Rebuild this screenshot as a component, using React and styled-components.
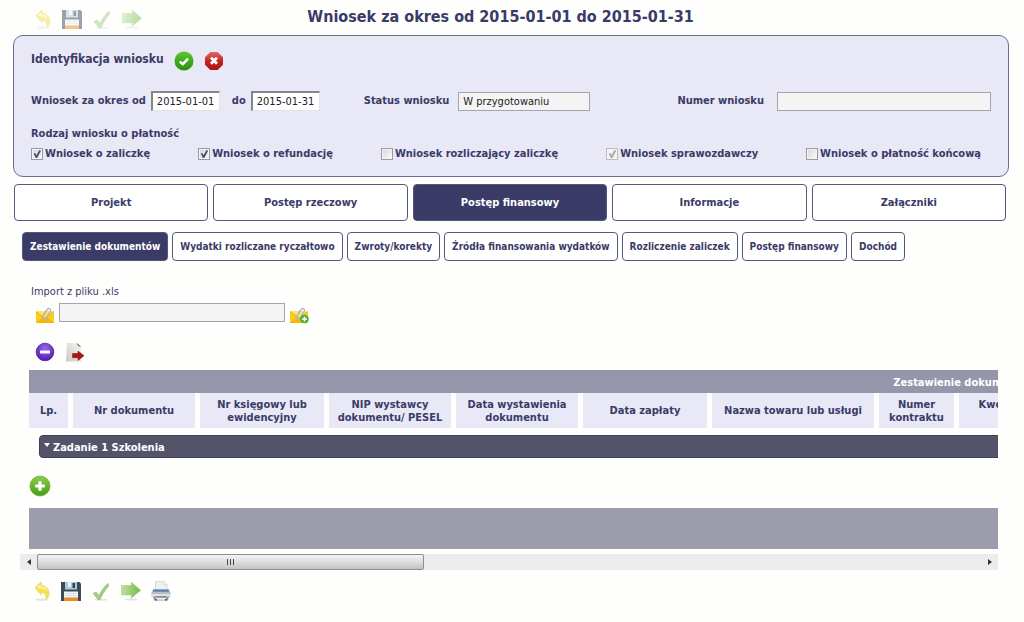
import React, { useState } from 'react';
import styled, { createGlobalStyle } from 'styled-components';

const NAVY = '#3a3b66';

const GlobalStyle = createGlobalStyle`
  * {
    box-sizing: border-box;
  }
  body {
    margin: 0;
    background: #fefefd;
    color: ${NAVY};
    font-family: 'DejaVu Sans Condensed', 'DejaVu Sans', Tahoma, sans-serif;
    font-size: 11px;
    line-height: 14px;
  }
  button, input {
    font: inherit;
    color: inherit;
  }
`;

const UndoIcon = () => (
  <svg width="20" height="20" viewBox="0 0 20 20">
    <ellipse cx="11" cy="18.600" rx="6.500" ry="1.200" fill="#e4e4e2" />
    <path d="M4 6.600 10.200 1v3.200c4.600.6 7.800 4 7.800 8.400 0 2.400-1 4.400-3 5.600.6-3.600-.8-6.400-4.800-7.200v3z" fill="#f7e04b" stroke="#e3ca45" strokeWidth=".6" />
    <path d="M5.400 6.600 9.400 2.900v2.200c4 .3 6.600 2.600 7.400 5.700C14.800 8.500 12.500 7.600 9.400 7.600z" fill="#fdf3a0" />
  </svg>
);

const SaveIcon = () => (
  <svg width="20" height="20" viewBox="0 0 20 20">
    <path d="M0 1h18.500L20 2.500V20H0z" fill="#3d4b56" />
    <path d="M4 1h12v7.500H4z" fill="#a9cbd9" />
    <path d="M7 1h3v5H7z" fill="#e8f3f6" />
    <path d="M11.500 2h2.500v5h-2.500z" fill="#35434e" />
    <path d="M3 10.500h14V17H3z" fill="#f1f5f7" />
    <path d="M3 16.500h14V20H3z" fill="#f08a24" />
    <path d="M4 12.500h12M4 14.500h12" stroke="#cfd9de" strokeWidth=".7" />
  </svg>
);

const CheckIcon = () => (
  <svg width="20" height="20" viewBox="0 0 20 20">
    <ellipse cx="10" cy="18.800" rx="6.500" ry="1" fill="#e4e4e2" />
    <path d="M2.200 12.400 4.900 11 8 14.600C10.500 9.600 13.200 5.500 17 2.400L17.800 4.800C14 9 11.200 13.500 9 18.600H7z" fill="#a2cf80" stroke="#83b765" strokeWidth=".6" />
  </svg>
);

const ForwardIcon = () => (
  <svg width="20" height="20" viewBox="0 0 20 20">
    <defs>
      <linearGradient id="forward" x1="0" x2="1">
        <stop offset="0" stopColor="#bfdfa2" />
        <stop offset="1" stopColor="#74b843" />
      </linearGradient>
    </defs>
    <ellipse cx="10" cy="18.500" rx="6.500" ry="1" fill="#e4e4e2" />
    <path d="M.5 4.500h9.800V1.200L19.700 9.200l-9.400 8v-3.300H.5z" fill="url(#forward)" stroke="#a3cf82" strokeWidth=".6" />
  </svg>
);

const PrintIcon = () => (
  <svg width="20" height="20" viewBox="0 0 20 20">
    <path d="M4.500.5h8.700L16 3.200V10H4.500z" fill="#eef0f2" stroke="#c3c8cc" strokeWidth=".6" />
    <path d="M13 .5v3h3" fill="#fff" stroke="#c3c8cc" strokeWidth=".6" />
    <path d="M2 8.500h16l1.500 3v4.500H.5v-4.500z" fill="#b5bec7" />
    <path d="M2.200 8.500h15.600v2.200H2.200z" fill="#5b7da8" />
    <path d="M.5 13h19v2.500H.5z" fill="#dfe4e8" />
    <path d="M2 15.500h16l-1 4H3z" fill="#9299a0" />
    <path d="M5 16h10v2.800H5z" fill="#e9eaea" />
    <path d="M5 15.500h10v1H5zM4 18h2v1.500H4zM14 18h2v1.500h-2z" fill="#5b6168" />
  </svg>
);

const AcceptIcon = () => (
  <svg width="20" height="20" viewBox="0 0 20 20">
    <defs>
      <linearGradient id="accept" x1="0" x2="0" y1="0" y2="1">
        <stop offset="0" stopColor="#5fc535" />
        <stop offset="1" stopColor="#2a8f0b" />
      </linearGradient>
    </defs>
    <circle cx="10" cy="10" r="9.500" fill="url(#accept)" />
    <path d="M5.800 10.600 8.800 13.200 14 7.600" fill="none" stroke="#fff" strokeWidth="2.500" />
  </svg>
);

const CancelIcon = () => (
  <svg width="20" height="20" viewBox="0 0 20 20">
    <defs>
      <linearGradient id="cancel" x1="0" x2="0" y1="0" y2="1">
        <stop offset="0" stopColor="#de6a68" />
        <stop offset=".5" stopColor="#c42522" />
        <stop offset="1" stopColor="#ad1210" />
      </linearGradient>
    </defs>
    <path d="M6.300 1h7.400L19 6.300v7.400L13.700 19H6.300L1 13.700V6.300z" fill="url(#cancel)" />
    <path d="M7 6.800 13 12.800M13 6.800 7 12.800" stroke="#fff" strokeWidth="2.800" />
  </svg>
);

const MinusIcon = () => (
  <svg width="20" height="20" viewBox="0 0 20 20">
    <defs>
      <radialGradient id="minus" cx=".5" cy=".3" r=".7">
        <stop offset="0" stopColor="#9566ea" />
        <stop offset="1" stopColor="#5518b4" />
      </radialGradient>
    </defs>
    <circle cx="10" cy="10" r="8.800" fill="url(#minus)" stroke="#4a1a9e" strokeWidth=".8" />
    <rect x="5" y="8.600" width="10" height="2.800" rx=".5" fill="#fff" />
  </svg>
);

const ExportIcon = () => (
  <svg width="20" height="20" viewBox="0 0 20 20">
    <defs>
      <linearGradient id="sheet" x1="1" x2="0" y1="0" y2="1">
        <stop offset="0" stopColor="#f6f6f4" />
        <stop offset="1" stopColor="#c9c9c7" />
      </linearGradient>
    </defs>
    <path d="M2 1h10l4 4v14.500H1z" fill="url(#sheet)" />
    <path d="M12 1l4 4-1.200-.2L12.600 3z" fill="#333" />
    <path d="M7.500 11.500h5.500V9l6 4.700-6 4.800v-2.800H7.500z" fill="#b01216" stroke="#7d0e12" strokeWidth=".5" />
  </svg>
);

const MailIcon = ({ plus }) => (
  <svg width="20" height="20" viewBox="0 0 20 20">
    <path d="M1 5.500h18V17H1z" fill="#fccb1f" />
    <path d="M1 5.500 10 12l9-6.500z" fill="#ffe45c" />
    <path d="M1 17 8 11l2 1.500 2-1.500 7 6z" fill="#f4b50e" />
    <path d="M1 5.500 10 12.200 19 5.500" fill="none" stroke="#e09e12" strokeWidth=".7" />
    <path d="M8 10.500 12.200 3.500c1-1.900 4.200-.5 3.200 1.600l-4 6.600c-1.600 2.200-4.600.6-3.500-1.600L11.500 4" fill="none" stroke="#a9b5cc" strokeWidth="1.300" />
    {plus && <circle cx="15.500" cy="13" r="4.300" fill="#4fae2c" />}
    {plus && <path d="M13 13h5M15.500 10.500v5" stroke="#fff" strokeWidth="1.500" />}
  </svg>
);

const AddIcon = () => (
  <svg width="22" height="22" viewBox="0 0 22 22">
    <defs>
      <linearGradient id="add" x1="0" x2="0" y1="0" y2="1">
        <stop offset="0" stopColor="#8fcc4c" />
        <stop offset="1" stopColor="#469c17" />
      </linearGradient>
    </defs>
    <circle cx="11" cy="11" r="10" fill="url(#add)" stroke="#62ad30" strokeWidth=".8" />
    <path d="M6.200 11h9.600M11 6.200v9.600" stroke="#fff" strokeWidth="3.200" />
  </svg>
);

const mainTabs = ['Projekt', 'Postęp rzeczowy', 'Postęp finansowy', 'Informacje', 'Załączniki'];

const subTabs = [
  'Zestawienie dokumentów',
  'Wydatki rozliczane ryczałtowo',
  'Zwroty/korekty',
  'Źródła finansowania wydatków',
  'Rozliczenie zaliczek',
  'Postęp finansowy',
  'Dochód',
];

const kinds = [
  { id: 'zaliczka', label: 'Wniosek o zaliczkę', on: true },
  { id: 'refundacja', label: 'Wniosek o refundację', on: true },
  { id: 'rozliczajacy', label: 'Wniosek rozliczający zaliczkę' },
  { id: 'sprawozdawczy', label: 'Wniosek sprawozdawczy', on: true, disabled: true },
  { id: 'koncowa', label: 'Wniosek o płatność końcową' },
];

// widths include the 5px separator on the right
const columns = [
  { title: 'Lp.', width: 44 },
  { title: 'Nr dokumentu', width: 127 },
  { title: 'Nr księgowy lub ewidencyjny', width: 129 },
  { title: 'NIP wystawcy dokumentu/ PESEL', width: 127 },
  { title: 'Data wystawienia dokumentu', width: 127 },
  { title: 'Data zapłaty', width: 129 },
  { title: 'Nazwa towaru lub usługi', width: 167 },
  { title: 'Numer kontraktu', width: 80 },
  { title: 'Kwota dokumentu brutto', width: 146 },
];

const App = () => {
  const [tab, setTab] = useState(2);
  const [subTab, setSubTab] = useState(0);

  return (
    <Page>
      <GlobalStyle />
      <Header>
        <Toolbar $faded>
          <IconButton aria-label="Cofnij"><UndoIcon /></IconButton>
          <IconButton aria-label="Zapisz"><SaveIcon /></IconButton>
          <IconButton aria-label="Sprawdź"><CheckIcon /></IconButton>
          <IconButton aria-label="Dalej"><ForwardIcon /></IconButton>
        </Toolbar>
        <Title>Wniosek za okres od 2015-01-01 do 2015-01-31</Title>
      </Header>

      <Panel>
        <PanelHead>
          <PanelTitle>Identyfikacja wniosku</PanelTitle>
          <IconButton aria-label="Zatwierdź"><AcceptIcon /></IconButton>
          <IconButton aria-label="Anuluj"><CancelIcon /></IconButton>
        </PanelHead>
        <Fields>
          <Field>
            <Label htmlFor="from">Wniosek za okres od</Label>
            <DateInput id="from" defaultValue="2015-01-01" />
          </Field>
          <Field>
            <Label htmlFor="to">do</Label>
            <DateInput id="to" defaultValue="2015-01-31" />
          </Field>
          <StatusField>
            <Label htmlFor="status">Status wniosku</Label>
            <ReadInput id="status" $width={132} readOnly value="W przygotowaniu" />
          </StatusField>
          <NumberField>
            <Label htmlFor="number">Numer wniosku</Label>
            <ReadInput id="number" $width={214} readOnly value="" />
          </NumberField>
        </Fields>
        <Kinds>
          <KindsTitle>Rodzaj wniosku o płatność</KindsTitle>
          <KindsRow>
            {kinds.map((k) => (
              <Kind key={k.id} htmlFor={k.id}>
                <Tick id={k.id} type="checkbox" defaultChecked={k.on} disabled={k.disabled} />
                {k.label}
              </Kind>
            ))}
          </KindsRow>
        </Kinds>
      </Panel>

      <Tabs>
        {mainTabs.map((name, i) => (
          <Tab key={name} $active={tab === i} onClick={() => setTab(i)}>{name}</Tab>
        ))}
      </Tabs>
      <SubTabs>
        {subTabs.map((name, i) => (
          <SubTab key={name} $active={subTab === i} onClick={() => setSubTab(i)}>{name}</SubTab>
        ))}
      </SubTabs>

      <Import>
        <label htmlFor="file">Import z pliku .xls</label>
        <ImportRow>
          <IconButton aria-label="Wybierz plik"><MailIcon /></IconButton>
          <ReadInput id="file" $width={226} readOnly value="" />
          <IconButton aria-label="Dodaj plik"><MailIcon plus /></IconButton>
        </ImportRow>
      </Import>
      <Actions>
        <IconButton aria-label="Usuń"><MinusIcon /></IconButton>
        <IconButton aria-label="Eksportuj"><ExportIcon /></IconButton>
      </Actions>

      <Scroller>
        <Table>
          <colgroup>
            {columns.map((c) => <col key={c.title} style={{ width: c.width }} />)}
            <col />
          </colgroup>
          <thead>
            <tr>
              <Band colSpan={10}>Zestawienie dokumentów</Band>
            </tr>
            <tr>
              {columns.map((c) => <Th key={c.title}>{c.title}</Th>)}
              <Th aria-hidden="true" />
            </tr>
          </thead>
          <tbody>
            <tr>
              <Cell colSpan={10}>
                <Task><Caret />Zadanie 1 Szkolenia</Task>
              </Cell>
            </tr>
            <tr>
              <Cell colSpan={10}>
                <AddButton aria-label="Dodaj"><AddIcon /></AddButton>
              </Cell>
            </tr>
          </tbody>
          <tfoot>
            <tr>
              <Summary colSpan={10} />
            </tr>
          </tfoot>
        </Table>
      </Scroller>
      <ScrollBar>
        <Arrow aria-label="Przewiń w lewo">
          <svg width="4" height="6" viewBox="0 0 4 6"><path d="M4 0v6L0 3z" fill="#333" /></svg>
        </Arrow>
        <Track>
          <Thumb><i /><i /><i /></Thumb>
        </Track>
        <Arrow aria-label="Przewiń w prawo">
          <svg width="4" height="6" viewBox="0 0 4 6"><path d="M0 0v6l4-3z" fill="#333" /></svg>
        </Arrow>
      </ScrollBar>

      <BottomBar>
        <IconButton aria-label="Cofnij"><UndoIcon /></IconButton>
        <IconButton aria-label="Zapisz"><SaveIcon /></IconButton>
        <IconButton aria-label="Sprawdź"><CheckIcon /></IconButton>
        <IconButton aria-label="Dalej"><ForwardIcon /></IconButton>
        <IconButton aria-label="Drukuj"><PrintIcon /></IconButton>
      </BottomBar>
    </Page>
  );
};

export default App;

const Page = styled.main`
  padding: 0 15px 20px 13px;
`;

const Header = styled.header`
  display: grid;
  grid-template-columns: 1fr auto 1fr;
  padding: 0 21px 0 0;
  height: 35px;
`;

const Toolbar = styled.div`
  display: flex;
  gap: 10px;
  padding: 9px 0 0 19px;
  opacity: ${(p) => (p.$faded ? 0.5 : 1)};
`;

const IconButton = styled.button`
  display: flex;
  flex: none;
  padding: 0;
  border: 0;
  background: none;
  cursor: pointer;
`;

const Title = styled.h1`
  margin: 0;
  padding-top: 7px;
  font-size: 16px;
  line-height: 20px;
  white-space: nowrap;
`;

const Panel = styled.section`
  padding: 15px 17px 14px;
  border: 1px solid #6c6d92;
  border-radius: 10px;
  background: #e8e8f6;
`;

const PanelHead = styled.div`
  display: flex;
  gap: 10px;
`;

const PanelTitle = styled.h2`
  margin: 0;
  font-size: 12px;
  line-height: 16px;
`;

const Fields = styled.div`
  display: flex;
  align-items: center;
  margin-top: 20px;
`;

const Field = styled.div`
  display: flex;
  align-items: center;
  gap: 5px;
  margin-right: 12px;
`;

const StatusField = styled(Field)`
  gap: 9px;
  margin-left: 32px;
`;

const NumberField = styled(Field)`
  gap: 13px;
  margin: 0 0 0 auto;
`;

const Label = styled.label`
  font-weight: bold;
  white-space: nowrap;
`;

const DateInput = styled.input`
  width: 69px;
  height: 20px;
  padding: 0 4px;
  border: 1px solid #e3e3e3;
  border-top: 2px solid #85868c;
  border-left: 2px solid #85868c;
  background: #fff;
  color: #222;
`;

const ReadInput = styled.input`
  width: ${(p) => p.$width}px;
  height: 19px;
  padding: 0 4px;
  border: 1px solid #a3a4b0;
  background: #f4f4f4;
  color: #222;
`;

const Kinds = styled.div`
  margin-top: 15px;
`;

const KindsTitle = styled.div`
  font-weight: bold;
  line-height: 16px;
`;

const KindsRow = styled.div`
  display: flex;
  justify-content: space-between;
  padding: 4px 10px 0 0;
`;

const Kind = styled.label`
  display: flex;
  align-items: center;
  gap: 2px;
  font-weight: bold;
  line-height: 16px;
  white-space: nowrap;
`;

const Tick = styled.input`
  appearance: none;
  display: flex;
  align-items: center;
  justify-content: center;
  width: 12px;
  height: 12px;
  margin: 0;
  border: 1px solid #9a9ba0;
  background: linear-gradient(135deg, #d3d5d8, #fbfbfb);
  box-shadow: inset 0 0 0 1px #f4f4f4;

  &:checked::before {
    content: '';
    width: 8px;
    height: 8px;
    background: #43517f;
    clip-path: polygon(8% 45%, 28% 38%, 42% 66%, 80% 0, 100% 8%, 52% 100%, 34% 100%);
  }
  &:disabled {
    border-color: #bcbcbc;
    background: #f2f2f2;
  }
  &:disabled::before {
    background: #a5a5a5;
  }
`;

const Tabs = styled.nav`
  display: grid;
  grid-template-columns: repeat(5, 1fr);
  gap: 5px;
  margin: 7px 3px 0 1px;
`;

const Tab = styled.button`
  height: 37px;
  border: 1px solid #56577f;
  border-radius: 4px;
  background: ${(p) => (p.$active ? NAVY : '#fff')};
  color: ${(p) => (p.$active ? '#fff' : NAVY)};
  font-weight: bold;
  cursor: pointer;
`;

const SubTabs = styled.nav`
  display: flex;
  gap: 4px;
  margin: 11px 0 0 9px;
`;

const SubTab = styled(Tab)`
  height: 29px;
  padding: 0 7px;
  font-size: 10px;
  white-space: nowrap;
`;

const Import = styled.div`
  margin: 24px 0 0 18px;
`;

const ImportRow = styled.div`
  display: flex;
  align-items: flex-start;
  gap: 4px;
  padding: 4px 0 0 4px;

  button {
    padding-top: 3px;
  }
`;

const Actions = styled.div`
  display: flex;
  gap: 10px;
  margin: 16px 0 0 22px;
`;

const Scroller = styled.div`
  margin: 8px 11px 0 16px;
  overflow: hidden;
`;

const Table = styled.table`
  width: 1872px;
  table-layout: fixed;
  border-spacing: 0;
`;

const Band = styled.th`
  height: 23px;
  padding: 2px 0 0;
  background: #9696aa;
  color: #fff;
`;

const Th = styled.th`
  height: 35px;
  padding: 0 8px;
  border-right: 5px solid #fefefd;
  background: #e8e8f6;
  background-clip: padding-box;
  line-height: 13px;
`;

const Cell = styled.td`
  padding: 0;
`;

const Task = styled.div`
  display: flex;
  align-items: center;
  gap: 3px;
  height: 23px;
  margin: 7px 0 0 10px;
  padding: 2px 4px 0;
  border: 1px solid #3f4058;
  border-radius: 4px;
  background: #53546a;
  color: #fff;
  font-weight: bold;
`;

const Caret = styled.span`
  border: 3px solid transparent;
  border-top: 4px solid #fff;
  border-bottom: 0;
  margin-bottom: 6px;
`;

const AddButton = styled(IconButton)`
  margin: 17px 0 11px;
`;

const Summary = styled.td`
  height: 41px;
  padding: 0;
  background: #9c9dac;
`;

const ScrollBar = styled.div`
  display: flex;
  height: 16px;
  margin: 5px 11px 0 7px;
  background: #ececec;
`;

const Arrow = styled.button`
  display: flex;
  align-items: center;
  justify-content: center;
  width: 17px;
  padding: 0;
  border: 0;
  background: none;
`;

const Track = styled.div`
  flex: 1;
  display: flex;
`;

const Thumb = styled.div`
  display: flex;
  align-items: center;
  justify-content: center;
  gap: 2px;
  width: 41%;
  border: 1px solid #8e8e8e;
  border-radius: 2px;
  background: linear-gradient(#f3f3f3, #dedede 50%, #c2c2c2);

  i {
    width: 1px;
    height: 6px;
    background: #444;
  }
`;

const BottomBar = styled.footer`
  display: flex;
  gap: 10px;
  margin: 11px 0 0 18px;
`;
